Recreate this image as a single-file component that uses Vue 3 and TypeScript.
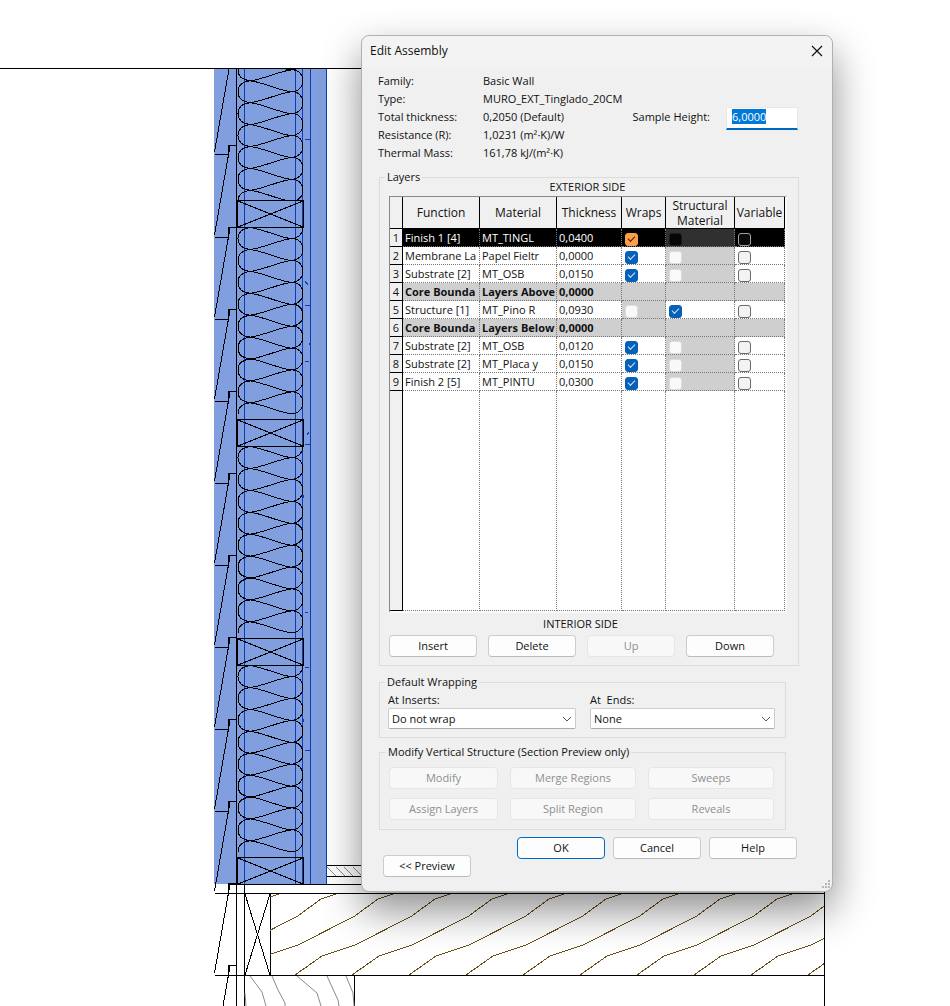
<script setup lang="ts">
import { onMounted, ref } from 'vue'

type Tick = 'on' | 'off' | 'disabled' | 'none'

interface Layer {
  fn: string
  material: string
  thickness: string
  wraps: Tick
  structural: Tick
  variable: Tick
  boundary?: boolean
}

const facts = [
  { label: 'Family:', value: 'Basic Wall' },
  { label: 'Type:', value: 'MURO_EXT_Tinglado_20CM' },
  { label: 'Total thickness:', value: '0,2050 (Default)' },
  { label: 'Resistance (R):', value: '1,0231 (m²·K)/W' },
  { label: 'Thermal Mass:', value: '161,78 kJ/(m²·K)' },
]

const headings = ['Function', 'Material', 'Thickness', 'Wraps', 'Structural Material', 'Variable']

const layers: Layer[] = [
  { fn: 'Finish 1 [4]', material: 'MT_TINGL', thickness: '0,0400', wraps: 'on', structural: 'disabled', variable: 'off' },
  { fn: 'Membrane La', material: 'Papel Fieltr', thickness: '0,0000', wraps: 'on', structural: 'disabled', variable: 'off' },
  { fn: 'Substrate [2]', material: 'MT_OSB', thickness: '0,0150', wraps: 'on', structural: 'disabled', variable: 'off' },
  { fn: 'Core Bounda', material: 'Layers Above', thickness: '0,0000', wraps: 'none', structural: 'none', variable: 'none', boundary: true },
  { fn: 'Structure [1]', material: 'MT_Pino R', thickness: '0,0930', wraps: 'disabled', structural: 'on', variable: 'off' },
  { fn: 'Core Bounda', material: 'Layers Below', thickness: '0,0000', wraps: 'none', structural: 'none', variable: 'none', boundary: true },
  { fn: 'Substrate [2]', material: 'MT_OSB', thickness: '0,0120', wraps: 'on', structural: 'disabled', variable: 'off' },
  { fn: 'Substrate [2]', material: 'MT_Placa y', thickness: '0,0150', wraps: 'on', structural: 'disabled', variable: 'off' },
  { fn: 'Finish 2 [5]', material: 'MT_PINTU', thickness: '0,0300', wraps: 'on', structural: 'disabled', variable: 'off' },
]

const tickColumns = ['wraps', 'structural', 'variable'] as const

const modifyButtons = ['Modify', 'Merge Regions', 'Sweeps', 'Assign Layers', 'Split Region', 'Reveals']

const sampleHeight = ref('6,0000')
const heightBox = ref<HTMLInputElement | null>(null)

onMounted(() => {
  heightBox.value?.focus()
  heightBox.value?.select()
})

// Batt insulation: one continuous looping strand per stud bay.
const step = 21.9
function batt(top: number, loops: number): string {
  let d = `M238 ${top}`
  for (let i = 0; i < loops; i++) {
    const y = top + i * step
    d += ` C238 ${y + 6} 242 ${y + 10} 250 ${y + 11}`
    d += ` C262 ${y + 12} 280 ${y + 21} 291 ${y + 22}`
    d += ` C298 ${y + 22} 303 ${y + 17} 303 ${y + 11}`
    d += ` C303 ${y + 5} 299 ${y} 292 ${y}`
    d += ` C280 ${y + 1} 262 ${y + 10} 250 ${y + 11}`
    d += ` C242 ${y + 12} 238 ${y + 16} 238 ${y + step}`
  }
  return d
}
const bays = [
  { clip: 'bay0', y: 69, h: 131, d: batt(47.9, 7) },
  { clip: 'bay1', y: 228, h: 191, d: batt(216.6, 9) },
  { clip: 'bay2', y: 447, h: 191, d: batt(435.6, 9) },
  { clip: 'bay3', y: 666, h: 191, d: batt(654.6, 9) },
]
const studs = [200, 419, 638, 857]

// Lap siding boards, stacked one above the other.
const boards = Array.from({ length: 12 }, (_, i) => {
  const n = Math.round(62.4 + i * 82.1)
  return `M236.5 ${n + 0.5}H228.5V${n + 10} M229.5 ${n + 1}V${n + 4}L214.5 ${n + 90} M215 ${n + 92.5}H228.5`
}).join(' ')

const grain = Array.from({ length: 13 }, (_, i) => {
  const x = (i - 3) * 57
  return `M${295 + x} 975L${322 + x} 956L${355 + x} 945L${411 + x} 916.5L${435 + x} 899L${450 + x} 894`
}).join(' ')
</script>

<template>
  <main class="workspace">
    <svg class="drawing" viewBox="0 0 950 1006" preserveAspectRatio="xMinYMin slice" aria-hidden="true">
      <defs>
        <clipPath v-for="b in bays" :id="b.clip" :key="b.clip">
          <rect x="230" :y="b.y" width="80" :height="b.h" />
        </clipPath>
        <clipPath id="joist"><rect x="270" y="893" width="554" height="82" /></clipPath>
        <clipPath id="page"><rect x="0" y="69" width="950" height="937" /></clipPath>
        <clipPath id="slab"><rect x="327" y="867" width="35" height="9" /></clipPath>
      </defs>

      <rect x="214" y="69" width="113" height="815" fill="#819fde" />
      <g stroke="#0a3cb4" fill="none" shape-rendering="crispEdges">
        <path d="M244.5 69V884M295.5 69V884M302.5 69V884M310.5 69V884M326.5 69V884" />
        <path d="M305 139.5H310M305 305.5H310M305 361.5H309M305 444.5H310M305 667.5H309M305 750.5H310M305 612.5H308M305 281L308 285M309.5 343V345M307 435L309 432M303.5 495V498M303.5 719V722" />
      </g>

      <g stroke="#000" fill="none" stroke-width="1">
        <path :d="boards" clip-path="url(#page)" shape-rendering="crispEdges" />
        <path d="M0 68.5H362M236.5 69V1006" shape-rendering="crispEdges" />
        <g v-for="b in bays" :key="b.clip" :clip-path="`url(#${b.clip})`">
          <path :d="b.d" shape-rendering="crispEdges" />
        </g>
        <g v-for="s in studs" :key="s" shape-rendering="crispEdges">
          <path :d="`M237.5 ${s + 0.5}H303.5V${s + 27.5}H237.5Z M238 ${s + 1}L303 ${s + 27}M303 ${s + 1}L238 ${s + 27}`" />
        </g>
        <g shape-rendering="crispEdges">
          <path d="M228 884.5H362M327 865.5H362M327 876.5H362" />
          <path d="M216 893.5H825M216 975.5H825M824.5 885V1006M244.5 884V1006M270.5 893V975M354.5 975V1006" />
          <path d="M245 894L270 975M270 894L245 975" />
        </g>
      </g>

      <path :d="grain" clip-path="url(#joist)" fill="none" stroke="#695018" shape-rendering="crispEdges" />
      <g fill="none" stroke="#8a8a8a">
        <path clip-path="url(#slab)" d="M318 867L328 877M327 867L337 877M336 867L346 877M344 867L354 877M353 867L363 877" />
        <path d="M250 976L262 992L266 1006M272 976L278 990L285 1003V1006M297 976L317 993L321 1006M327 976L338 1000L339 1006M346 976L353 993L354 1006M245 993L246 1006" />
      </g>
    </svg>

    <form class="dialog" aria-labelledby="dialog-title" @submit.prevent>
      <header class="titlebar">
        <h1 id="dialog-title">Edit Assembly</h1>
        <button class="close" type="button" aria-label="Close">
          <svg viewBox="0 0 12 12" width="12" height="12"><path d="M1 1L11 11M11 1L1 11" fill="none" stroke="#111" stroke-width="1.2" /></svg>
        </button>
      </header>

      <div class="content">
        <section class="summary">
          <dl>
            <div v-for="f in facts" :key="f.label">
              <dt>{{ f.label }}</dt>
              <dd>{{ f.value }}</dd>
            </div>
          </dl>
          <div class="sample">
            <label for="sample-height">Sample Height:</label>
            <input id="sample-height" ref="heightBox" v-model="sampleHeight" type="text" />
          </div>
        </section>

        <fieldset class="layers">
          <legend>Layers</legend>
          <p class="side">EXTERIOR SIDE</p>
          <div class="gridbox">
            <table>
              <colgroup>
                <col class="c-no" /><col class="c-text" /><col class="c-text" /><col class="c-thick" />
                <col class="c-wraps" /><col class="c-struct" /><col class="c-var" />
              </colgroup>
              <thead>
                <tr>
                  <th class="corner"></th>
                  <th v-for="h in headings" :key="h" scope="col">{{ h }}</th>
                </tr>
              </thead>
              <tbody>
                <tr v-for="(row, i) in layers" :key="i" :class="{ selected: i === 0, boundary: row.boundary }">
                  <th scope="row">{{ i + 1 }}</th>
                  <td>{{ row.fn }}</td>
                  <td>{{ row.material }}</td>
                  <td>{{ row.thickness }}</td>
                  <td v-for="c in tickColumns" :key="c" class="tick" :class="row[c]">
                    <input
                      v-if="row[c] !== 'none'"
                      type="checkbox"
                      :aria-label="`Layer ${i + 1} ${c}`"
                      :checked="row[c] === 'on'"
                      :disabled="row[c] === 'disabled'"
                    />
                  </td>
                </tr>
                <tr class="filler">
                  <th></th>
                  <td v-for="n in 6" :key="n"></td>
                </tr>
              </tbody>
            </table>
          </div>
          <p class="side interior">INTERIOR SIDE</p>
          <div class="row-buttons">
            <button type="button">Insert</button>
            <button type="button">Delete</button>
            <button type="button" disabled>Up</button>
            <button type="button">Down</button>
          </div>
        </fieldset>

        <fieldset class="wrapping">
          <legend>Default Wrapping</legend>
          <div class="choice">
            <label for="inserts">At Inserts:</label>
            <div class="select">
              <select id="inserts"><option>Do not wrap</option></select>
              <svg viewBox="0 0 10 6" width="10" height="6"><path d="M1 1L5 5L9 1" fill="none" stroke="#555" /></svg>
            </div>
          </div>
          <div class="choice">
            <label for="ends">At&nbsp; Ends:</label>
            <div class="select">
              <select id="ends"><option>None</option></select>
              <svg viewBox="0 0 10 6" width="10" height="6"><path d="M1 1L5 5L9 1" fill="none" stroke="#555" /></svg>
            </div>
          </div>
        </fieldset>

        <fieldset class="modify">
          <legend>Modify Vertical Structure (Section Preview only)</legend>
          <div class="modify-grid">
            <button v-for="m in modifyButtons" :key="m" type="button" disabled>{{ m }}</button>
          </div>
        </fieldset>

        <footer class="actions">
          <button class="preview" type="button">&lt;&lt; Preview</button>
          <div class="confirm">
            <button class="default" type="submit">OK</button>
            <button type="button">Cancel</button>
            <button type="button">Help</button>
          </div>
        </footer>
      </div>

      <svg class="grip" viewBox="0 0 10 10" width="10" height="10" aria-hidden="true">
        <path d="M7 1h2M4 4h2M7 4h2M1 7h2M4 7h2M7 7h2" stroke="#b8b8b8" stroke-width="2" />
      </svg>
    </form>
  </main>
</template>

<style>
body {
  margin: 0;
  background: #fff;
}
</style>

<style scoped>
* {
  box-sizing: border-box;
}

.workspace {
  position: relative;
  min-height: 100vh;
  overflow: hidden;
  font: 11px/18px "Open Sans", "Noto Sans", sans-serif;
  color: #111;
}

.drawing {
  position: absolute;
  inset: 0;
  width: 100%;
  height: 100%;
}

.dialog {
  position: absolute;
  left: 361px;
  top: 35px;
  width: 472px;
  background: #f0f0f0;
  border: 1px solid #b0b0b0;
  border-radius: 8px;
  box-shadow: 0 18px 40px rgba(0, 0, 0, 0.45);
}

.titlebar {
  display: flex;
  align-items: center;
  justify-content: space-between;
  height: 31px;
  padding: 0 4px 2px 8px;
  background: #f3f3f3;
  border-radius: 8px 8px 0 0;
}

h1 {
  margin: 0;
  font-size: 12px;
  font-weight: 400;
}

button {
  height: 22px;
  padding: 0;
  font: inherit;
  line-height: 20px;
  color: #111;
  background: #fdfdfd;
  border: 1px solid #cccccc;
  border-bottom-color: #bbbbbb;
  border-radius: 4px;
}

button:disabled {
  color: #8f8f8f;
  background: #f8f8f8;
  border-color: #e6e6e6;
}

.close {
  display: grid;
  place-items: center;
  width: 22px;
  background: none;
  border: 0;
}

.content {
  padding: 5px 16px 14px 17px;
}

.summary {
  display: flex;
  justify-content: space-between;
  height: 90px;
  padding-right: 18px;
}

dl {
  margin: 0 0 0 -1px;
}

dl div {
  display: grid;
  grid-template-columns: 105px auto;
}

dt,
dd {
  margin: 0;
  height: 18px;
}

.sample {
  display: flex;
  gap: 16px;
  margin-top: 36px;
  height: 22px;
}

.sample input {
  width: 72px;
  height: 23px;
  margin-top: -1px;
  padding: 0 5px 4px;
  font: inherit;
  color: #111;
  background: #fff;
  border: 1px solid #e8e8e8;
  border-bottom: 2px solid #0067c0;
  border-radius: 0;
  outline: none;
}

.sample input::selection {
  color: #fff;
  background: #0078d7;
}

fieldset {
  min-width: 0;
  margin: 0;
  padding: 0 12px 8px 9px;
  border: 1px solid #dcdcdc;
}

legend {
  margin-left: -4px;
  padding: 0 2px;
  line-height: 8px;
}

.layers {
  width: 420px;
  margin-top: 11px;
}

.side {
  margin: 0;
  line-height: 12px;
  text-align: center;
}

.interior {
  line-height: 22px;
  padding-right: 14px;
}

.gridbox {
  width: 398px;
  margin-top: 3px;
  border: solid #fafafa;
  border-width: 1px 2px 2px 1px;
  border-top-color: #888;
  border-left-color: #888;
}

table {
  width: 100%;
  table-layout: fixed;
  border-collapse: separate;
  border-spacing: 0;
  background: #fff;
  font-size: 11px;
}

.c-no { width: 13px; }
.c-text { width: 77px; }
.c-thick { width: 65px; }
.c-wraps { width: 44px; }
.c-struct { width: 69px; }

th,
td {
  overflow: hidden;
  height: 18px;
  padding: 0 0 0 2px;
  font-weight: 400;
  line-height: 16px;
  text-align: left;
  white-space: nowrap;
  border: 0 dotted #777;
  border-width: 0 1px 1px 0;
}

thead th {
  height: 32px;
  padding: 0;
  font-size: 12px;
  line-height: 15px;
  text-align: center;
  white-space: normal;
  background: #f0f0f0;
  border: solid #000;
  border-width: 0 1px 1px 0;
}

tbody th {
  padding: 0;
  text-align: center;
  background: #f0f0f0;
  border: solid #000;
  border-width: 0 1px 1px 0;
}

.tick {
  padding: 3px 0 0 3px;
}

.tick.disabled,
.boundary td {
  background: #cfcfcf;
}

.boundary td {
  font-weight: 700;
}

.selected td {
  color: #fff;
  background: #000;
}

.selected .disabled {
  background: #303030;
}

.filler th,
.filler td {
  height: 220px;
}

input[type="checkbox"] {
  appearance: none;
  display: grid;
  place-items: center;
  width: 13px;
  height: 13px;
  margin: 0;
  background: #f3f3f3;
  border: 1px solid #6a6a6a;
  border-radius: 3px;
}

input[type="checkbox"]:disabled {
  background: #f9f9f9;
  border-color: #dddddd;
}

input[type="checkbox"]:checked {
  background: #0560b8;
  border-color: #0560b8;
}

input[type="checkbox"]:checked::before {
  content: "";
  width: 6px;
  height: 3px;
  margin-bottom: 2px;
  border: solid #d5e8fa;
  border-width: 0 0 1px 1px;
  transform: rotate(-45deg);
}

.selected input[type="checkbox"] {
  background: #0c0c0c;
  border-color: #a0a0a0;
}

.selected input[type="checkbox"]:disabled {
  background: #060606;
  border-color: #1c1c1c;
}

.selected input[type="checkbox"]:checked {
  background: #fa9f47;
  border-color: #fa9f47;
}

.selected input[type="checkbox"]:checked::before {
  border-color: #3a2008;
}

.row-buttons {
  display: grid;
  grid-template-columns: repeat(4, 88px);
  gap: 11px;
}

.wrapping,
.modify {
  width: 407px;
}

.wrapping {
  display: grid;
  grid-template-columns: 188px 185px;
  gap: 14px;
  margin-top: 12px;
  padding: 5px 8px 8px;
}

.choice label {
  display: block;
  height: 17px;
}

.select {
  position: relative;
}

.select select {
  display: block;
  appearance: none;
  width: 100%;
  height: 21px;
  padding: 0 20px 0 3px;
  font: inherit;
  color: #111;
  background: #fff;
  border: 1px solid #cccccc;
  border-bottom-color: #aaaaaa;
  border-radius: 2px;
}

.select svg {
  position: absolute;
  top: 8px;
  right: 4px;
  pointer-events: none;
}

.modify {
  margin-top: 10px;
  padding: 11px 9px 9px;
}

.wrapping legend,
.modify legend {
  margin-left: -3px;
}

.modify-grid {
  display: grid;
  grid-template-columns: 109px 126px 126px;
  gap: 9px 12px;
}

.actions {
  display: flex;
  align-items: flex-end;
  justify-content: space-between;
  height: 47px;
  padding: 0 19px 0 4px;
}

.preview {
  width: 88px;
}

.confirm {
  display: flex;
  gap: 8px;
  align-self: flex-start;
  margin-top: 7px;
}

.confirm button {
  width: 88px;
}

.confirm .default {
  border-color: #0067c0;
}

.grip {
  position: absolute;
  right: 1px;
  bottom: 1px;
}
</style>
